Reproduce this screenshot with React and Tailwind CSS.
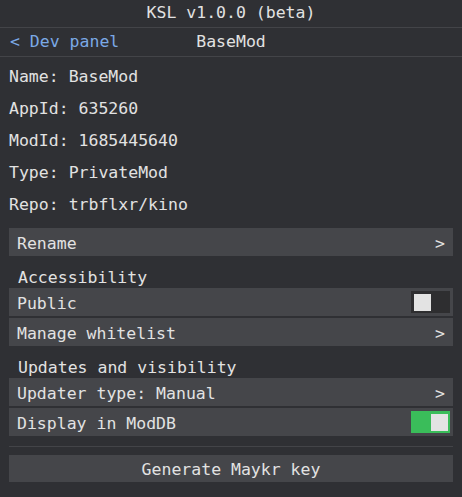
import { useState } from "react";

const font = { fontFamily: '"DejaVu Sans Mono", monospace' };

function Toggle({ on, onChange }) {
    return (
        <button
            onClick={() => onChange(!on)}
            className={`w-[39px] h-[22px] flex items-center px-[3px] ${on ? "bg-[#3abd5a] justify-end pr-[2px]" : "bg-[#2e2e30] justify-start"}`}
        >
            <span className="block w-[17px] h-[17px] bg-[#e3e3e3]" />
        </button>
    );
}

function Row({ label, chevron, children }) {
    return (
        <div className="h-[28px] mx-[9px] bg-[#45464a] flex items-center justify-between pl-2 pr-[3px]">
            <span className="translate-y-[2px]">{label}</span>
            {chevron && <span className="pr-[5px] translate-y-[2px]">&gt;</span>}
            {children}
        </div>
    );
}

function Section({ title }) {
    return (
        <div className="h-8 flex items-end pl-[18px] leading-[22px]">
            <span className="translate-y-px">{title}</span>
        </div>
    );
}

export default function App() {
    const [isPublic, setIsPublic] = useState(false);
    const [inModDb, setInModDb] = useState(true);

    const info = [
        ["Name", "BaseMod"],
        ["AppId", "635260"],
        ["ModId", "1685445640"],
        ["Type", "PrivateMod"],
        ["Repo", "trbflxr/kino"],
    ];

    return (
        <div className="w-[462px] h-[497px] bg-[#2f3034] text-[#e2e2e2] text-[16.5px] overflow-hidden" style={font}>
            <div className="h-[28px] flex items-center justify-center border-b border-[#434448]">
                KSL v1.0.0 (beta)
            </div>
            <div className="h-[29px] relative flex items-center border-b border-[#434448]">
                <span className="pl-[10px] text-[#7ba9e6]">&lt; Dev panel</span>
                <span className="absolute left-0 right-0 text-center pointer-events-none">BaseMod</span>
            </div>

            <div className="pt-[3px]">
                {info.map(([k, v]) => (
                    <div key={k} className="h-8 flex items-center pl-[9px] pt-[2px]">
                        {k}: {v}
                    </div>
                ))}
            </div>

            <div className="mt-2">
                <Row label="Rename" chevron />
            </div>

            <Section title="Accessibility" />
            <div className="flex flex-col gap-[2px]">
                <Row label="Public">
                    <Toggle on={isPublic} onChange={setIsPublic} />
                </Row>
                <Row label="Manage whitelist" chevron />
            </div>

            <Section title="Updates and visibility" />
            <div className="flex flex-col gap-[2px]">
                <Row label="Updater type: Manual" chevron />
                <Row label="Display in ModDB">
                    <Toggle on={inModDb} onChange={setInModDb} />
                </Row>
            </div>

            <div className="mx-[9px] mt-[10px] h-px bg-[#434448]" />

            <button className="mt-2 mx-[9px] w-[444px] h-[27px] bg-[#45464a] flex items-center justify-center">
                <span className="translate-y-[2px]">Generate Maykr key</span>
            </button>
        </div>
    );
}
